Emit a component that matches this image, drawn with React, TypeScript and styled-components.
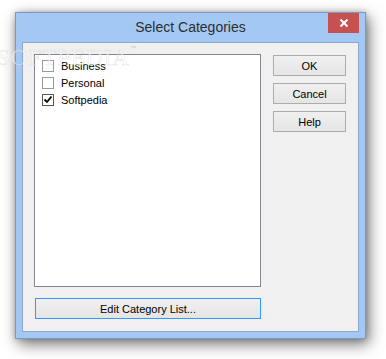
import React from "react";
import styled, { createGlobalStyle } from "styled-components";

const GlobalSC = createGlobalStyle`
  html, body {
    margin: 0;
    background: #ffffff;
  }
`;

const categories = [
  { name: "Business", checked: false },
  { name: "Personal", checked: false },
  { name: "Softpedia", checked: true },
];

const App = () => {
  return (
    <PageSC>
      <GlobalSC />
      <WindowSC>
        <TitleBarSC>
          <span />
          <TitleSC>Select Categories</TitleSC>
          <CloseSC>
            <svg width="10" height="10" viewBox="0 0 10 10">
              <path d="M1.5 1.5 L8.5 8.5 M8.5 1.5 L1.5 8.5" stroke="#fff" strokeWidth="2" />
            </svg>
          </CloseSC>
        </TitleBarSC>
        <ClientSC>
          <LeftColSC>
            <ListSC>
              {categories.map((c) => (
                <RowSC key={c.name}>
                  <CheckSC $dark={c.checked}>
                    {c.checked && (
                      <svg width="10" height="10" viewBox="0 0 10 10">
                        <path d="M1.5 4.5 L4 7 L8.5 1.5" stroke="#000" strokeWidth="1.8" fill="none" />
                      </svg>
                    )}
                  </CheckSC>
                  <LabelSC>{c.name}</LabelSC>
                </RowSC>
              ))}
            </ListSC>
            <ButtonSC $wide $focused>Edit Category List...</ButtonSC>
          </LeftColSC>
          <RightColSC>
            <ButtonSC>OK</ButtonSC>
            <ButtonSC>Cancel</ButtonSC>
            <ButtonSC>Help</ButtonSC>
          </RightColSC>
        </ClientSC>
      </WindowSC>
      <WatermarkSC>
        SOFTPEDIA<sup>™</sup>
      </WatermarkSC>
    </PageSC>
  );
};

const PageSC = styled("div")`
  position: relative;
  width: 386px;
  height: 359px;
  padding: 12px 0 0 15px;
  box-sizing: border-box;
  overflow: hidden;
`;

const WindowSC = styled("div")`
  width: 351px;
  height: 327px;
  box-sizing: border-box;
  background: #a3c8f3;
  border: 1px solid #7b9ac2;
  padding: 0 6px 6px 6px;
  display: flex;
  flex-direction: column;
  box-shadow: 3px 5px 14px rgba(0, 0, 0, 0.55), 0 0 6px rgba(0, 0, 0, 0.2);
`;

const TitleBarSC = styled("div")`
  height: 29px;
  display: grid;
  grid-template-columns: 1fr auto 1fr;
  align-items: start;
`;

const TitleSC = styled("div")`
  font-family: "Liberation Sans", Arial, sans-serif;
  font-size: 14px;
  color: #2e2e2e;
  line-height: 29px;
`;

const CloseSC = styled("div")`
  justify-self: end;
  width: 31px;
  height: 20px;
  background: #c75050;
  display: flex;
  align-items: center;
  justify-content: center;
`;

const ClientSC = styled("div")`
  flex: 1;
  background: #f0f0f0;
  border: 1px solid #8fa8c8;
  padding: 11px 0 0 11px;
  display: flex;
  gap: 12px;
`;

const LeftColSC = styled("div")`
  display: flex;
  flex-direction: column;
  gap: 11px;
  width: 227px;
`;

const ListSC = styled("div")`
  height: 233px;
  box-sizing: border-box;
  background: #ffffff;
  border: 1px solid #828790;
  padding: 5px 0 0 7px;
  display: flex;
  flex-direction: column;
  gap: 5px;
`;

const RowSC = styled("div")`
  display: flex;
  align-items: center;
  gap: 7px;
  height: 12px;
`;

const CheckSC = styled("div")<{ $dark?: boolean }>`
  width: 12px;
  height: 12px;
  box-sizing: border-box;
  border: 1px solid ${(p) => (p.$dark ? "#555555" : "#9a9a9a")};
  background: #fff;
  display: flex;
  align-items: center;
  justify-content: center;
`;

const LabelSC = styled("span")`
  font-family: "Liberation Sans", Arial, sans-serif;
  font-size: 11px;
  color: #000;
`;

const RightColSC = styled("div")`
  display: flex;
  flex-direction: column;
  gap: 7px;
  padding-top: 1px;
`;

const ButtonSC = styled("div")<{ $wide?: boolean; $focused?: boolean }>`
  width: ${(p) => (p.$wide ? "226px" : "73px")};
  height: 21px;
  margin-left: ${(p) => (p.$wide ? "1px" : "0")};
  box-sizing: border-box;
  border: 1px solid ${(p) => (p.$focused ? "#3399ff" : "#acacac")};
  background: linear-gradient(#f0f0f0, #e5e5e5);
  font-family: "Liberation Sans", Arial, sans-serif;
  font-size: 11px;
  color: #000;
  display: flex;
  align-items: center;
  justify-content: center;
`;

const WatermarkSC = styled("div")`
  position: absolute;
  left: -3px;
  top: 45px;
  font-family: "Liberation Serif", serif;
  font-size: 23px;
  letter-spacing: 1px;
  color: rgba(255, 255, 255, 0.55);
  -webkit-text-stroke: 0.6px rgba(170, 170, 170, 0.3);
  pointer-events: none;
  sup {
    font-family: "Liberation Sans", Arial, sans-serif;
    font-size: 6px;
    vertical-align: top;
    color: rgba(150, 150, 150, 0.5);
    -webkit-text-stroke: 0;
  }
`;

export default App;
